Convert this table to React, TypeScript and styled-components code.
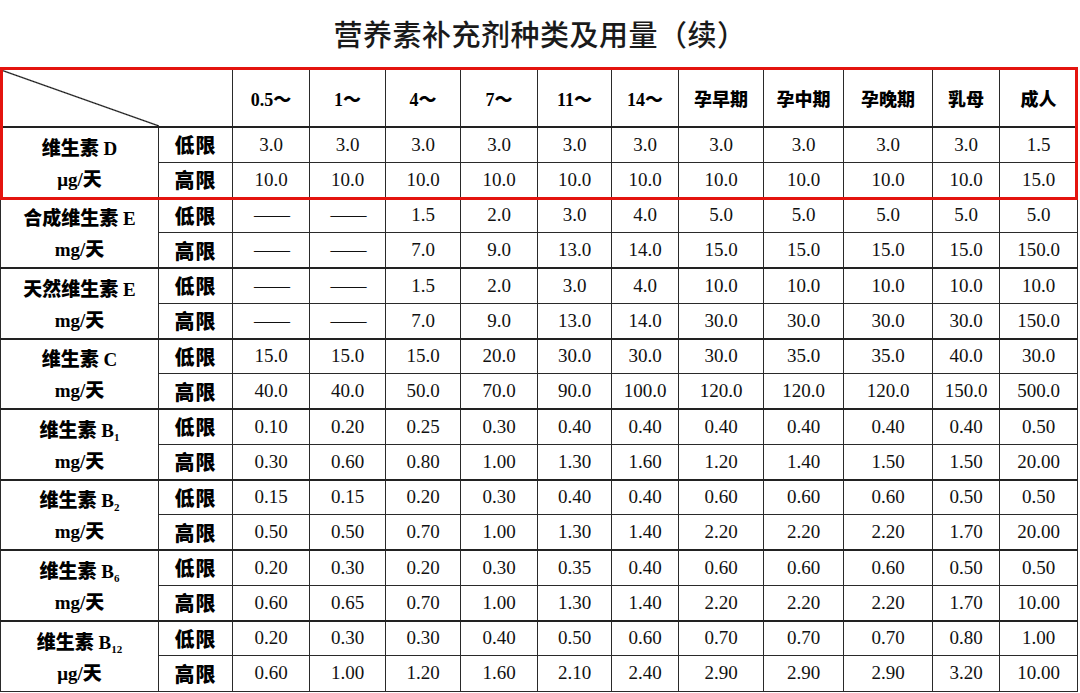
import React from 'react'
import styled, { createGlobalStyle } from 'styled-components'

type Group = {
    name: React.ReactNode
    unit: string
    low: string[]
    high: string[]
}

const DASH = '——'

const columns = ['0.5～', '1～', '4～', '7～', '11～', '14～', '孕早期', '孕中期', '孕晚期', '乳母', '成人']
const colWidths = [158, 74, 77, 76, 75, 77, 74, 67, 85, 80, 89, 67, 78]

const groups: Group[] = [
    {
        name: <>维生素 D</>,
        unit: 'μg/天',
        low: ['3.0', '3.0', '3.0', '3.0', '3.0', '3.0', '3.0', '3.0', '3.0', '3.0', '1.5'],
        high: ['10.0', '10.0', '10.0', '10.0', '10.0', '10.0', '10.0', '10.0', '10.0', '10.0', '15.0'],
    },
    {
        name: <>合成维生素 E</>,
        unit: 'mg/天',
        low: [DASH, DASH, '1.5', '2.0', '3.0', '4.0', '5.0', '5.0', '5.0', '5.0', '5.0'],
        high: [DASH, DASH, '7.0', '9.0', '13.0', '14.0', '15.0', '15.0', '15.0', '15.0', '150.0'],
    },
    {
        name: <>天然维生素 E</>,
        unit: 'mg/天',
        low: [DASH, DASH, '1.5', '2.0', '3.0', '4.0', '10.0', '10.0', '10.0', '10.0', '10.0'],
        high: [DASH, DASH, '7.0', '9.0', '13.0', '14.0', '30.0', '30.0', '30.0', '30.0', '150.0'],
    },
    {
        name: <>维生素 C</>,
        unit: 'mg/天',
        low: ['15.0', '15.0', '15.0', '20.0', '30.0', '30.0', '30.0', '35.0', '35.0', '40.0', '30.0'],
        high: ['40.0', '40.0', '50.0', '70.0', '90.0', '100.0', '120.0', '120.0', '120.0', '150.0', '500.0'],
    },
    {
        name: <>维生素 B<Sub>1</Sub></>,
        unit: 'mg/天',
        low: ['0.10', '0.20', '0.25', '0.30', '0.40', '0.40', '0.40', '0.40', '0.40', '0.40', '0.50'],
        high: ['0.30', '0.60', '0.80', '1.00', '1.30', '1.60', '1.20', '1.40', '1.50', '1.50', '20.00'],
    },
    {
        name: <>维生素 B<Sub>2</Sub></>,
        unit: 'mg/天',
        low: ['0.15', '0.15', '0.20', '0.30', '0.40', '0.40', '0.60', '0.60', '0.60', '0.50', '0.50'],
        high: ['0.50', '0.50', '0.70', '1.00', '1.30', '1.40', '2.20', '2.20', '2.20', '1.70', '20.00'],
    },
    {
        name: <>维生素 B<Sub>6</Sub></>,
        unit: 'mg/天',
        low: ['0.20', '0.30', '0.20', '0.30', '0.35', '0.40', '0.60', '0.60', '0.60', '0.50', '0.50'],
        high: ['0.60', '0.65', '0.70', '1.00', '1.30', '1.40', '2.20', '2.20', '2.20', '1.70', '10.00'],
    },
    {
        name: <>维生素 B<Sub>12</Sub></>,
        unit: 'μg/天',
        low: ['0.20', '0.30', '0.30', '0.40', '0.50', '0.60', '0.70', '0.70', '0.70', '0.80', '1.00'],
        high: ['0.60', '1.00', '1.20', '1.60', '2.10', '2.40', '2.90', '2.90', '2.90', '3.20', '10.00'],
    },
]

function Sub({ children }: { children: React.ReactNode }) {
    return <SubStyled>{children}</SubStyled>
}

const App: React.FC = () => {
    return (
        <Page>
            <GlobalStyle />
            <Title>营养素补充剂种类及用量（续）</Title>
            <TableWrap>
                <Table>
                    <colgroup>
                        {colWidths.map((w, i) => (
                            <col key={i} style={{ width: w }} />
                        ))}
                    </colgroup>
                    <thead>
                        <tr>
                            <Corner colSpan={2} />
                            {columns.map((c) => (
                                <HeadCell key={c}>{c}</HeadCell>
                            ))}
                        </tr>
                    </thead>
                    {groups.map((g, gi) => (
                        <tbody key={gi}>
                            <Row $groupStart>
                                <NameCell rowSpan={2}>
                                    <NameLine>{g.name}</NameLine>
                                    <NameLine>{g.unit}</NameLine>
                                </NameCell>
                                <LimitCell>低限</LimitCell>
                                {g.low.map((v, i) => (
                                    <ValueCell key={i} $dash={v === DASH}>{v}</ValueCell>
                                ))}
                            </Row>
                            <Row>
                                <LimitCell>高限</LimitCell>
                                {g.high.map((v, i) => (
                                    <ValueCell key={i} $dash={v === DASH}>{v}</ValueCell>
                                ))}
                            </Row>
                        </tbody>
                    ))}
                </Table>
                <Highlight />
            </TableWrap>
        </Page>
    )
}

const GlobalStyle = createGlobalStyle`
    html, body {
        margin: 0;
        padding: 0;
        background: #fff;
    }
    body {
        font-family: "Liberation Serif", "Noto Sans CJK SC", serif;
        color: #111;
        overflow: hidden;
    }
`

const Page = styled.div`
    width: 1080px;
    height: 693px;
    overflow: hidden;
    background: #fff;
`

const Title = styled.h1`
    margin: 0;
    height: 69px;
    display: flex;
    align-items: center;
    justify-content: center;
    padding-bottom: 4px;
    box-sizing: border-box;
    font-family: "Noto Sans CJK SC", serif;
    font-weight: 500;
    font-size: 29px;
    color: #1a1a1a;
    letter-spacing: 0.5px;
`

const TableWrap = styled.div`
    position: relative;
    width: 1078px;
`

const Table = styled.table`
    table-layout: fixed;
    border-collapse: collapse;
    width: 1078px;
`

const baseCell = `
    border: 1px solid #2a2a2a;
    padding: 0;
    text-align: center;
    vertical-align: middle;
`

/* the slash only runs across the name column, ending where 低限/高限 begins */
const Corner = styled.th`
    ${baseCell}
    height: 56px;
    background-image: linear-gradient(
        to top right,
        transparent calc(50% - 1.2px),
        #111 50%,
        transparent calc(50% + 1.2px)
    );
    background-size: 158px 100%;
    background-repeat: no-repeat;
    background-position: left top;
`

const HeadCell = styled.th`
    ${baseCell}
    font-family: "Liberation Serif", "Noto Sans CJK SC", serif;
    font-weight: 900;
    font-size: 18px;
    color: #000;
`

const Row = styled.tr<{ $groupStart?: boolean }>`
    height: 35.25px;
    border-top: ${(p) => (p.$groupStart ? '2px solid #222' : '1px solid #2a2a2a')};
`

const NameCell = styled.td`
    ${baseCell}
    font-family: "Liberation Serif", "Noto Sans CJK SC", serif;
    font-weight: 900;
    font-size: 19px;
    color: #000;
    padding-top: 3px;
`

const NameLine = styled.div`
    line-height: 31px;
    white-space: nowrap;
`

const SubStyled = styled.sub`
    font-size: 11px;
    vertical-align: -4px;
    line-height: 0;
`

const LimitCell = styled.td`
    ${baseCell}
    font-family: "Noto Sans CJK SC", sans-serif;
    font-weight: 900;
    font-size: 20px;
    color: #000;
    letter-spacing: 1px;
`

const ValueCell = styled.td<{ $dash?: boolean }>`
    ${baseCell}
    font-family: "Liberation Serif", serif;
    font-size: 19px;
    color: #111;
    letter-spacing: ${(p) => (p.$dash ? '-2px' : '0')};
`

const Highlight = styled.div`
    position: absolute;
    left: 0;
    top: -2px;
    width: 1078px;
    height: 133px;
    border: 3px solid #e4140f;
    box-sizing: border-box;
    pointer-events: none;
`

export default App
